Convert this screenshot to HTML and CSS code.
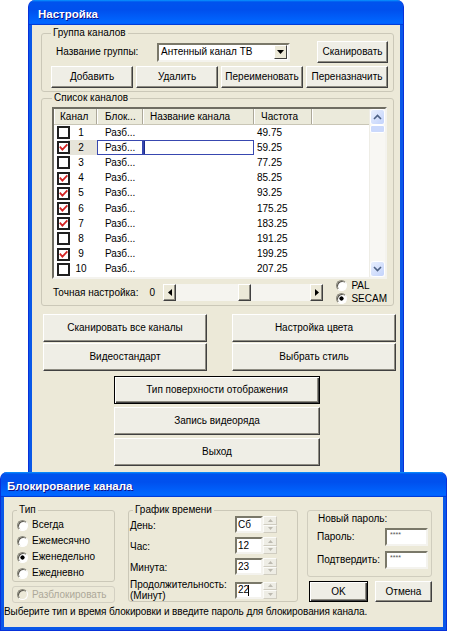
FILE: index.html
```html
<!DOCTYPE html>
<html lang="ru">
<head>
<meta charset="utf-8">
<title>Настройка</title>
<link rel="stylesheet" href="styles.css">
</head>
<body>
<div class="desktop">
  <section class="win win-main">
    <header class="titlebar"><span class="title">Настройка</span></header>
    <div class="client main-client">
      <fieldset class="grp grp-groups">
        <legend>Группа каналов</legend>
        <div class="grp-row1">
          <span class="lbl-group">Название группы:</span>
          <div class="combo">
            <span class="combo-text">Антенный канал ТВ</span>
            <span class="combo-btn"><svg width="7" height="4" viewBox="0 0 7 4"><path d="M0 0h7L3.5 4z" fill="#000"/></svg></span>
          </div>
          <button class="btn btn-scan">Сканировать</button>
        </div>
        <div class="grp-row2">
          <button class="btn">Добавить</button>
          <button class="btn">Удалить</button>
          <button class="btn">Переименовать</button>
          <button class="btn">Переназначить</button>
        </div>
      </fieldset>

      <fieldset class="grp grp-list">
        <legend>Список каналов</legend>
        <div class="listview">
          <div class="lv-table">
            <div class="lv-head">
              <span class="hc c1">Канал</span>
              <span class="hc c2">Блок...</span>
              <span class="hc c3">Название канала</span>
              <span class="hc c4">Частота</span>
              <span class="hc c5"></span>
            </div>
            <div class="lv-row">
              <span class="cell c1"><i class="chk"></i><span class="num">1</span></span>
              <span class="cell c2">Разб...</span><span class="cell c3"></span><span class="cell c4">49.75</span>
            </div>
            <div class="lv-row sel">
              <span class="cell c1"><i class="chk"><svg class="tick" width="9" height="9" viewBox="0 0 9 9"><polyline points="0.8,3.6 3.4,6.6 8.4,1.4" fill="none" stroke="#d42424" stroke-width="1.8"/></svg></i><span class="num">2</span></span>
              <span class="cell c2">Разб...</span><span class="cell c3"></span><span class="cell c4">59.25</span>
            </div>
            <div class="lv-row">
              <span class="cell c1"><i class="chk"></i><span class="num">3</span></span>
              <span class="cell c2">Разб...</span><span class="cell c3"></span><span class="cell c4">77.25</span>
            </div>
            <div class="lv-row">
              <span class="cell c1"><i class="chk"><svg class="tick" width="9" height="9" viewBox="0 0 9 9"><polyline points="0.8,3.6 3.4,6.6 8.4,1.4" fill="none" stroke="#d42424" stroke-width="1.8"/></svg></i><span class="num">4</span></span>
              <span class="cell c2">Разб...</span><span class="cell c3"></span><span class="cell c4">85.25</span>
            </div>
            <div class="lv-row">
              <span class="cell c1"><i class="chk"><svg class="tick" width="9" height="9" viewBox="0 0 9 9"><polyline points="0.8,3.6 3.4,6.6 8.4,1.4" fill="none" stroke="#d42424" stroke-width="1.8"/></svg></i><span class="num">5</span></span>
              <span class="cell c2">Разб...</span><span class="cell c3"></span><span class="cell c4">93.25</span>
            </div>
            <div class="lv-row">
              <span class="cell c1"><i class="chk"><svg class="tick" width="9" height="9" viewBox="0 0 9 9"><polyline points="0.8,3.6 3.4,6.6 8.4,1.4" fill="none" stroke="#d42424" stroke-width="1.8"/></svg></i><span class="num">6</span></span>
              <span class="cell c2">Разб...</span><span class="cell c3"></span><span class="cell c4">175.25</span>
            </div>
            <div class="lv-row">
              <span class="cell c1"><i class="chk"><svg class="tick" width="9" height="9" viewBox="0 0 9 9"><polyline points="0.8,3.6 3.4,6.6 8.4,1.4" fill="none" stroke="#d42424" stroke-width="1.8"/></svg></i><span class="num">7</span></span>
              <span class="cell c2">Разб...</span><span class="cell c3"></span><span class="cell c4">183.25</span>
            </div>
            <div class="lv-row">
              <span class="cell c1"><i class="chk"></i><span class="num">8</span></span>
              <span class="cell c2">Разб...</span><span class="cell c3"></span><span class="cell c4">191.25</span>
            </div>
            <div class="lv-row">
              <span class="cell c1"><i class="chk"><svg class="tick" width="9" height="9" viewBox="0 0 9 9"><polyline points="0.8,3.6 3.4,6.6 8.4,1.4" fill="none" stroke="#d42424" stroke-width="1.8"/></svg></i><span class="num">9</span></span>
              <span class="cell c2">Разб...</span><span class="cell c3"></span><span class="cell c4">199.25</span>
            </div>
            <div class="lv-row">
              <span class="cell c1"><i class="chk"></i><span class="num">10</span></span>
              <span class="cell c2">Разб...</span><span class="cell c3"></span><span class="cell c4">207.25</span>
            </div>
          </div>
          <div class="vscroll">
            <span class="vs-btn"><svg width="9" height="6" viewBox="0 0 9 6"><path d="M1 5L4.5 1.5 8 5" fill="none" stroke="#4d6185" stroke-width="1.6"/></svg></span>
            <span class="vs-thumb"></span>
            <span class="vs-track"></span>
            <span class="vs-btn"><svg width="9" height="6" viewBox="0 0 9 6"><path d="M1 1L4.5 4.5 8 1" fill="none" stroke="#4d6185" stroke-width="1.6"/></svg></span>
          </div>
        </div>
        <div class="tune">
          <span class="tune-lbl">Точная настройка:</span>
          <span class="tune-val">0</span>
          <div class="hscroll">
            <span class="sb-btn"><svg width="4" height="7" viewBox="0 0 4 7"><path d="M4 0v7L0 3.5z" fill="#000"/></svg></span>
            <span class="sb-track"><span class="sb-thumb"></span></span>
            <span class="sb-btn"><svg width="4" height="7" viewBox="0 0 4 7"><path d="M0 0v7l4-3.5z" fill="#000"/></svg></span>
          </div>
          <div class="std-radios">
            <span class="radio"><i class="rd"></i>PAL</span>
            <span class="radio"><i class="rd on"></i>SECAM</span>
          </div>
        </div>
      </fieldset>

      <div class="btn-grid">
        <button class="btn">Сканировать все каналы</button>
        <button class="btn">Настройка цвета</button>
        <button class="btn">Видеостандарт</button>
        <button class="btn">Выбрать стиль</button>
      </div>
      <div class="btn-col">
        <button class="btn btn-default">Тип поверхности отображения</button>
        <button class="btn">Запись видеоряда</button>
        <button class="btn">Выход</button>
      </div>
    </div>
  </section>

  <section class="win win-lock">
    <header class="titlebar"><span class="title">Блокирование канала</span></header>
    <div class="client lock-client">
      <div class="lock-top">
        <div class="col-type">
          <fieldset class="grp grp-type">
            <legend>Тип</legend>
            <span class="radio trow"><i class="rd"></i>Всегда</span>
            <span class="radio trow"><i class="rd"></i>Ежемесячно</span>
            <span class="radio trow"><i class="rd on"></i>Еженедельно</span>
            <span class="radio trow"><i class="rd"></i>Ежедневно</span>
          </fieldset>
          <div class="unlock-box"><span class="radio disabled"><i class="rd"></i>Разблокировать</span></div>
        </div>
        <fieldset class="grp grp-time">
          <legend>График времени</legend>
          <div class="time-grid">
            <span class="tlbl">День:</span>
            <div class="spin"><span class="spin-field">Сб</span><span class="spin-btns"><span class="sp-up"><svg width="5" height="3" viewBox="0 0 5 3"><path d="M0 3h5L2.5 0z" fill="#bdbab0"/></svg></span><span class="sp-dn"><svg width="5" height="3" viewBox="0 0 5 3"><path d="M0 0h5L2.5 3z" fill="#bdbab0"/></svg></span></span></div>
            <span class="tlbl">Час:</span>
            <div class="spin"><span class="spin-field">12</span><span class="spin-btns"><span class="sp-up"><svg width="5" height="3" viewBox="0 0 5 3"><path d="M0 3h5L2.5 0z" fill="#bdbab0"/></svg></span><span class="sp-dn"><svg width="5" height="3" viewBox="0 0 5 3"><path d="M0 0h5L2.5 3z" fill="#bdbab0"/></svg></span></span></div>
            <span class="tlbl">Минута:</span>
            <div class="spin"><span class="spin-field">23</span><span class="spin-btns"><span class="sp-up"><svg width="5" height="3" viewBox="0 0 5 3"><path d="M0 3h5L2.5 0z" fill="#bdbab0"/></svg></span><span class="sp-dn"><svg width="5" height="3" viewBox="0 0 5 3"><path d="M0 0h5L2.5 3z" fill="#bdbab0"/></svg></span></span></div>
            <span class="tlbl tlbl-2">Продолжительность:<br>(Минут)</span>
            <div class="spin"><span class="spin-field">22<i class="caret"></i></span><span class="spin-btns"><span class="sp-up"><svg width="5" height="3" viewBox="0 0 5 3"><path d="M0 3h5L2.5 0z" fill="#bdbab0"/></svg></span><span class="sp-dn"><svg width="5" height="3" viewBox="0 0 5 3"><path d="M0 0h5L2.5 3z" fill="#bdbab0"/></svg></span></span></div>
          </div>
        </fieldset>
        <div class="col-pass">
          <div class="pass-box">
            <div class="pass-title">Новый пароль:</div>
            <div class="pass-row"><span class="plbl">Пароль:</span><span class="pwd">****</span></div>
            <div class="pass-row pass-row2"><span class="plbl">Подтвердить:</span><span class="pwd">****</span></div>
          </div>
          <div class="lock-btns">
            <button class="btn btn-default btn-ok">OK</button>
            <button class="btn btn-cancel">Отмена</button>
          </div>
        </div>
      </div>
      <div class="status">Выберите тип и время блокировки и введите пароль для блокирования канала.</div>
    </div>
  </section>
</div>
</body>
</html>
```
FILE: styles.css
```css
* { box-sizing: border-box; }
html, body { margin: 0; padding: 0; }
body {
  width: 450px; height: 631px; overflow: hidden; background: #fff;
  font-family: "Liberation Sans", Arial, sans-serif; font-size: 10px; line-height: 12px; color: #000;
}
.desktop { position: relative; width: 450px; height: 631px; }

/* windows */
.win {
  position: absolute; display: flex; flex-direction: column;
  background: #0a58e8; border: 1px solid #0831d9; border-top: 0;
  border-radius: 7px 7px 0 0; padding: 0 3px 3px; overflow: hidden;
}
.win-main { left: 28px; top: 0; width: 376px; height: 490px; }
.win-lock { left: 0; top: 472px; width: 447px; height: 159px; }
.titlebar {
  height: 25px; margin: 0 -4px; flex: none; display: flex; align-items: center; padding-top: 3px;
  background: linear-gradient(180deg, #0997ff, #0053ee 8%, #0050ee 40%, #0066ff 88%, #0066ff 93%, #005bff 95%, #003dd7 96%, #003dd7);
  border-radius: 7px 7px 0 0;
}
.win-main .titlebar { padding-left: 10px; }
.win-lock .titlebar { padding-left: 7px; }
.title { color: #fff; font-weight: bold; font-size: 11.5px; text-shadow: 1px 1px #0f1089; }
.client { flex: 1; background: #ece9d8; display: flex; flex-direction: column; min-height: 0; }

/* group boxes */
.grp { margin: 0; padding: 0; border: 1px solid #cbc8b8; border-radius: 3px; min-width: 0; }
.grp > legend { padding: 0 2px; line-height: 12px; }

/* buttons */
.btn {
  font: inherit; color: #000; padding: 0; margin: 0;
  background: #efeee6; border: 1px solid; border-color: #fff #404040 #404040 #fff;
  box-shadow: inset -1px -1px #8e8c82;
}
.btn-default {
  border-color: #000;
  box-shadow: inset 1px 1px #fff, inset -1px -1px #404040, inset -2px -2px #8e8c82;
}

/* group 1 */
.grp-groups { margin: 2px 6px 0 9px; padding: 2px 5px 3px 9px; }
.grp-row1 { display: flex; align-items: center; height: 22px; }
.lbl-group { margin-left: 5px; width: 101px; }
.combo {
  width: 133px; height: 19px; display: flex; align-items: center; background: #fff;
  border: 2px solid; border-color: #7a7869 #f4f3ee #f4f3ee #7a7869; padding: 0 1px 0 2px;
}
.combo-text { flex: 1; }
.combo-btn {
  width: 13px; height: 14px; display: flex; align-items: center; justify-content: center;
  background: #ece9d8; border: 1px solid; border-color: #fff #404040 #404040 #fff;
}
.btn-scan { margin-left: auto; width: 71px; height: 22px; }
.grp-row2 { display: grid; grid-template-columns: repeat(4, 1fr); gap: 3px; margin-top: 3px; height: 22px; }

/* group 2: channel list */
.grp-list { margin: 0 6px 0 9px; padding: 3px 6px 0 10px; }
.listview {
  display: flex; height: 172px; border: 2px solid;
  border-color: #6f6d62 #f4f3ee #f4f3ee #6f6d62; background: #fff;
}
.lv-table { flex: 1; min-width: 0; display: flex; flex-direction: column; }
.lv-head { display: flex; height: 16px; background: #ebeadb; border-bottom: 1px solid #c9c6b6; flex: none; }
.hc { line-height: 15px; border-right: 1px solid #aca899; box-shadow: inset 1px 0 #fff; white-space: nowrap; overflow: hidden; }
.hc.c1 { padding-left: 6px; }
.hc.c2 { padding-left: 8px; }
.hc.c3 { padding-left: 7px; }
.hc.c4 { padding-left: 7px; }
.hc.c5 { border-right: 0; }
.c1 { width: 43px; flex: none; }
.c2 { width: 46px; flex: none; }
.c3 { width: 111px; flex: none; }
.c4 { width: 58px; flex: none; }
.c5 { flex: 1; }
.lv-row { display: flex; height: 15.2px; flex: none; }
.cell { display: flex; align-items: center; height: 100%; }
.cell.c2 { padding-left: 8px; }
.cell.c4 { padding-left: 3px; }
.chk {
  width: 13px; height: 13px; margin-left: 3px; flex: none; display: flex; align-items: center; justify-content: center;
  border: 2px solid #1f1f1f; background: #fff;
}
.num { width: 22px; text-align: center; flex: none; }
.sel .c1 { background: linear-gradient(to right, transparent 14px, #e6e4da 14px); }
.sel .c2 { box-shadow: inset 0 0 0 1px #3848b0; }
.sel .c3 { box-shadow: inset 0 0 0 1px #3848b0, inset 2px 0 #1a2a8a; }

.vscroll { width: 16px; flex: none; display: flex; flex-direction: column; background: #f8f7f3; border-left: 1px solid #eeede6; }
.vs-btn {
  height: 16px; flex: none; display: flex; align-items: center; justify-content: center;
  background: linear-gradient(135deg, #e8effd, #c3d3fc); border: 1px solid #fff; border-radius: 3px;
}
.vs-thumb { height: 8px; flex: none; background: #cbd9fc; border: 1px solid #fff; border-radius: 2px; }
.vs-track { flex: 1; }

.tune { display: flex; align-items: flex-start; height: 26px; padding-left: 1px; }
.tune-lbl { width: 98px; margin-top: 5px; line-height: 17px; }
.tune-val { width: 14px; margin-top: 5px; line-height: 17px; }
.hscroll { width: 163px; height: 17px; margin-top: 5px; display: flex; background: #f5f4ef; }
.sb-btn, .sb-thumb {
  width: 13px; height: 17px; flex: none; display: flex; align-items: center; justify-content: center;
  background: #ece9d8; border: 1px solid; border-color: #fff #404040 #404040 #fff; box-shadow: inset -1px -1px #8e8c82;
}
.sb-track { flex: 1; display: flex; }
.sb-thumb { margin-left: 62px; }
.std-radios { margin-left: 13px; display: flex; flex-direction: column; }

.radio { display: flex; align-items: center; height: 13px; gap: 4px; white-space: nowrap; }
.rd {
  width: 11px; height: 11px; flex: none; border-radius: 50%; background: #fff;
  border: 1px solid; border-color: #8a887c #fff #fff #8a887c; box-shadow: inset 1px 1px #5a5850;
}
.rd.on { background: radial-gradient(circle, #000 0 1.8px, #fff 2.4px); }

/* bottom button area */
.btn-grid {
  display: grid; grid-template-columns: 164px 164px; grid-auto-rows: 28px;
  column-gap: 25px; row-gap: 1px; margin: 8px 0 0 11px;
}
.btn-col { display: flex; flex-direction: column; gap: 3px; margin: 5px 0 0 82px; width: 206px; }
.btn-col .btn { height: 28px; }

/* lock dialog */
.lock-top { display: flex; align-items: flex-start; padding-left: 8px; }
.col-type { width: 103px; flex: none; }
.grp-type { margin-top: 7px; padding: 1px 0 0 4px; }
.trow { height: 16px; }
.unlock-box {
  margin-top: 4px; height: 17px; display: flex; align-items: center; padding-left: 4px;
  border: 1px solid #d3d0c2; border-radius: 3px;
}
.radio.disabled { color: #aca899; }
.radio.disabled .rd { background: #ece9d8; }

.grp-time { margin: 7px 0 0 13px; width: 170px; flex: none; padding: 0 0 0 1px; }
.grp-time > legend { margin-left: 3px; }
.time-grid { display: grid; grid-template-columns: 105px 42px; grid-template-rows: 17px 17px 17px 22px; row-gap: 4px; }
.tlbl { align-self: center; padding-top: 2px; }
.tlbl-2 { line-height: 11px; padding-top: 0; }
.spin { display: flex; height: 17px; align-self: center; }
.spin-field {
  width: 28px; display: flex; align-items: center; padding-left: 1px; background: #fff;
  border: 2px solid; border-color: #7a7869 #f4f3ee #f4f3ee #7a7869;
}
.caret { display: inline-block; width: 1px; height: 11px; background: #000; margin-left: -1px; }
.spin-btns { width: 14px; display: flex; flex-direction: column; }
.sp-up, .sp-dn {
  flex: 1; display: flex; align-items: center; justify-content: center;
  background: #eeede5; border: 1px solid; border-color: #fbfbf8 #cfccc0 #cfccc0 #fbfbf8;
}

.col-pass { margin-left: 9px; width: 125px; flex: none; }
.pass-box { margin-top: 13px; height: 67px; border: 1px solid #d0cdbe; border-radius: 3px; padding: 2px 0 0 9px; }
.pass-title { margin-left: 1px; }
.pass-row { display: flex; align-items: center; height: 18px; margin-top: 3px; }
.pass-row2 { margin-top: 5px; }
.plbl { width: 68px; flex: none; }
.pwd {
  width: 43px; height: 18px; background: #fff; font-size: 7px; line-height: 8px; color: #555;
  border: 2px solid; border-color: #7a7869 #f4f3ee #f4f3ee #7a7869; padding: 1px 0 0 3px;
}
.lock-btns { display: flex; gap: 7px; margin-top: 4px; padding-left: 2px; }
.lock-btns .btn { height: 21px; }
.btn-ok { width: 59px; }
.btn-cancel { width: 57px; }
.status { margin-top: 3px; white-space: nowrap; letter-spacing: -0.1px; }
```
